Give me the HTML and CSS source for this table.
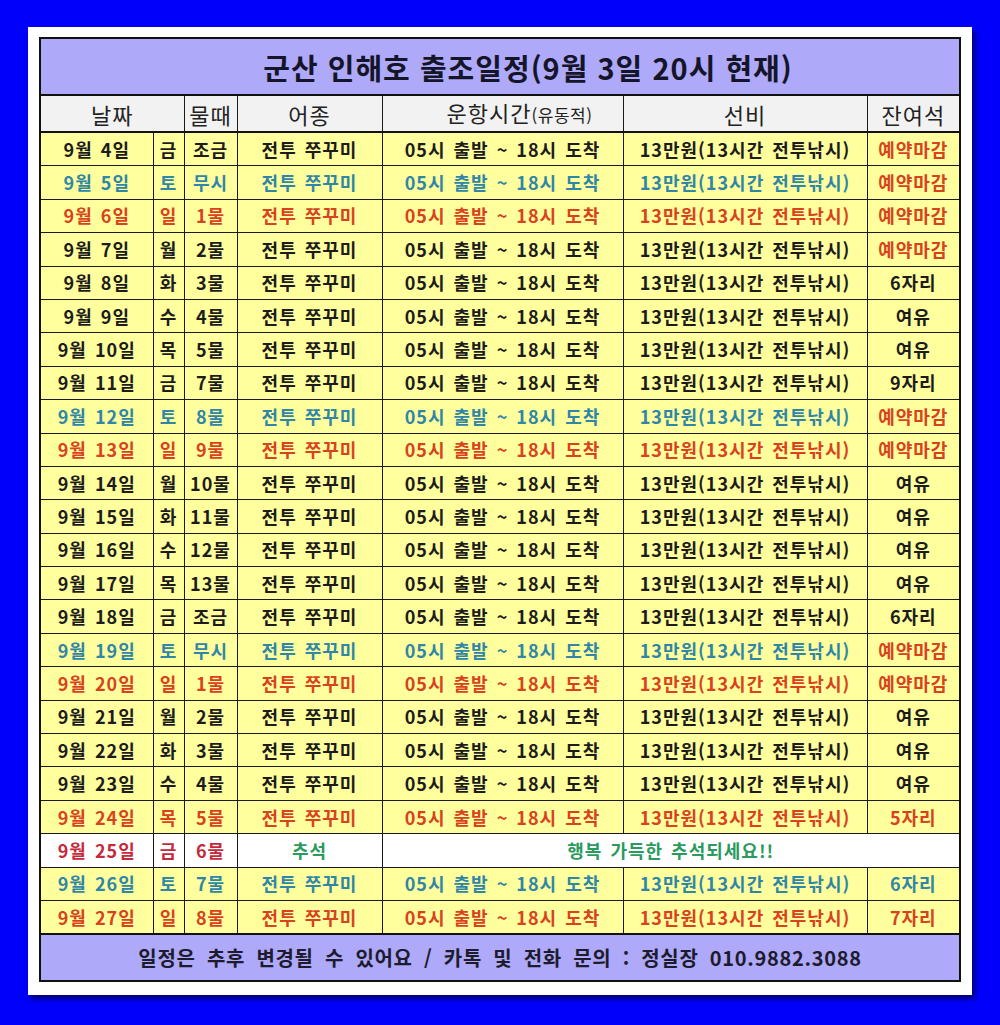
FILE: index.html
```html
<!DOCTYPE html>
<html lang="ko">
<head>
<meta charset="utf-8">
<title>군산 인해호 출조일정</title>
<link rel="stylesheet" href="styles.css">
</head>
<body>
<div class="panel">
<table class="sched">
<colgroup>
<col class="c-date"><col class="c-day"><col class="c-tide"><col class="c-fish"><col class="c-time"><col class="c-fee"><col class="c-seat">
</colgroup>
<thead>
<tr class="title"><th colspan="7">군산 인해호 출조일정(9월 3일 20시 현재)</th></tr>
<tr class="head"><th colspan="2">날짜</th><th>물때</th><th>어종</th><th class="h-time">운항시간<small>(유동적)</small></th><th>선비</th><th>잔여석</th></tr>
</thead>
<tbody>
<tr><td>9월 4일</td><td>금</td><td>조금</td><td>전투 쭈꾸미</td><td>05시 출발 ~ 18시 도착</td><td>13만원(13시간 전투낚시)</td><td class="red">예약마감</td></tr>
<tr class="blue"><td>9월 5일</td><td>토</td><td>무시</td><td>전투 쭈꾸미</td><td>05시 출발 ~ 18시 도착</td><td>13만원(13시간 전투낚시)</td><td class="red">예약마감</td></tr>
<tr class="red"><td>9월 6일</td><td>일</td><td>1물</td><td>전투 쭈꾸미</td><td>05시 출발 ~ 18시 도착</td><td>13만원(13시간 전투낚시)</td><td>예약마감</td></tr>
<tr><td>9월 7일</td><td>월</td><td>2물</td><td>전투 쭈꾸미</td><td>05시 출발 ~ 18시 도착</td><td>13만원(13시간 전투낚시)</td><td class="red">예약마감</td></tr>
<tr><td>9월 8일</td><td>화</td><td>3물</td><td>전투 쭈꾸미</td><td>05시 출발 ~ 18시 도착</td><td>13만원(13시간 전투낚시)</td><td>6자리</td></tr>
<tr><td>9월 9일</td><td>수</td><td>4물</td><td>전투 쭈꾸미</td><td>05시 출발 ~ 18시 도착</td><td>13만원(13시간 전투낚시)</td><td>여유</td></tr>
<tr><td>9월 10일</td><td>목</td><td>5물</td><td>전투 쭈꾸미</td><td>05시 출발 ~ 18시 도착</td><td>13만원(13시간 전투낚시)</td><td>여유</td></tr>
<tr><td>9월 11일</td><td>금</td><td>7물</td><td>전투 쭈꾸미</td><td>05시 출발 ~ 18시 도착</td><td>13만원(13시간 전투낚시)</td><td>9자리</td></tr>
<tr class="blue"><td>9월 12일</td><td>토</td><td>8물</td><td>전투 쭈꾸미</td><td>05시 출발 ~ 18시 도착</td><td>13만원(13시간 전투낚시)</td><td class="red">예약마감</td></tr>
<tr class="red"><td>9월 13일</td><td>일</td><td>9물</td><td>전투 쭈꾸미</td><td>05시 출발 ~ 18시 도착</td><td>13만원(13시간 전투낚시)</td><td>예약마감</td></tr>
<tr><td>9월 14일</td><td>월</td><td>10물</td><td>전투 쭈꾸미</td><td>05시 출발 ~ 18시 도착</td><td>13만원(13시간 전투낚시)</td><td>여유</td></tr>
<tr><td>9월 15일</td><td>화</td><td>11물</td><td>전투 쭈꾸미</td><td>05시 출발 ~ 18시 도착</td><td>13만원(13시간 전투낚시)</td><td>여유</td></tr>
<tr><td>9월 16일</td><td>수</td><td>12물</td><td>전투 쭈꾸미</td><td>05시 출발 ~ 18시 도착</td><td>13만원(13시간 전투낚시)</td><td>여유</td></tr>
<tr><td>9월 17일</td><td>목</td><td>13물</td><td>전투 쭈꾸미</td><td>05시 출발 ~ 18시 도착</td><td>13만원(13시간 전투낚시)</td><td>여유</td></tr>
<tr><td>9월 18일</td><td>금</td><td>조금</td><td>전투 쭈꾸미</td><td>05시 출발 ~ 18시 도착</td><td>13만원(13시간 전투낚시)</td><td>6자리</td></tr>
<tr class="blue"><td>9월 19일</td><td>토</td><td>무시</td><td>전투 쭈꾸미</td><td>05시 출발 ~ 18시 도착</td><td>13만원(13시간 전투낚시)</td><td class="red">예약마감</td></tr>
<tr class="red"><td>9월 20일</td><td>일</td><td>1물</td><td>전투 쭈꾸미</td><td>05시 출발 ~ 18시 도착</td><td>13만원(13시간 전투낚시)</td><td>예약마감</td></tr>
<tr><td>9월 21일</td><td>월</td><td>2물</td><td>전투 쭈꾸미</td><td>05시 출발 ~ 18시 도착</td><td>13만원(13시간 전투낚시)</td><td>여유</td></tr>
<tr><td>9월 22일</td><td>화</td><td>3물</td><td>전투 쭈꾸미</td><td>05시 출발 ~ 18시 도착</td><td>13만원(13시간 전투낚시)</td><td>여유</td></tr>
<tr><td>9월 23일</td><td>수</td><td>4물</td><td>전투 쭈꾸미</td><td>05시 출발 ~ 18시 도착</td><td>13만원(13시간 전투낚시)</td><td>여유</td></tr>
<tr class="red"><td>9월 24일</td><td>목</td><td>5물</td><td>전투 쭈꾸미</td><td>05시 출발 ~ 18시 도착</td><td>13만원(13시간 전투낚시)</td><td>5자리</td></tr>
<tr class="holiday"><td>9월 25일</td><td>금</td><td>6물</td><td class="green">추석</td><td class="green" colspan="3">행복 가득한 추석되세요!!</td></tr>
<tr class="blue"><td>9월 26일</td><td>토</td><td>7물</td><td>전투 쭈꾸미</td><td>05시 출발 ~ 18시 도착</td><td>13만원(13시간 전투낚시)</td><td>6자리</td></tr>
<tr class="red"><td>9월 27일</td><td>일</td><td>8물</td><td>전투 쭈꾸미</td><td>05시 출발 ~ 18시 도착</td><td>13만원(13시간 전투낚시)</td><td>7자리</td></tr>
</tbody>
<tfoot>
<tr class="foot"><td colspan="7">일정은 추후 변경될 수 있어요 / 카톡 및 전화 문의 : 정실장 010.9882.3088</td></tr>
</tfoot>
</table>
</div>
</body>
</html>
```

FILE: styles.css
```css
html, body {
  margin: 0;
  padding: 0;
}
body {
  background: #0000fb;
  width: 1000px;
  height: 1025px;
  padding-top: 27px;
  box-sizing: border-box;
  font-family: "Noto Sans CJK KR", "Noto Sans", sans-serif;
}
.panel {
  margin-left: 28px;
  width: 944px;
  height: 968px;
  box-sizing: border-box;
  background: #ffffff;
  padding: 10px 13px 11px 11px;
  box-shadow: 3px 4px 5px rgba(0, 0, 60, 0.7);
}
.sched {
  width: 920px;
  border-collapse: collapse;
  table-layout: fixed;
  border: 2px solid #111;
}
.c-date { width: 113px; }
.c-day { width: 31px; }
.c-tide { width: 53px; }
.c-fish { width: 145px; }
.c-time { width: 241px; }
.c-fee { width: 244px; }
.c-seat { width: 93px; }

.sched th, .sched td {
  border: 1px solid #1a1a1a;
  padding: 0;
  text-align: center;
  white-space: nowrap;
  overflow: hidden;
}
.sched .title th {
  background: #aea9f8;
  height: 55px;
  font-size: 29px;
  font-weight: 700;
  color: #15152a;
  border-bottom: 2px solid #111;
  letter-spacing: 1px;
  line-height: 34px;
  padding-left: 56px;
}
.head th {
  background: #f2f2f2;
  height: 35px;
  font-size: 22px;
  font-weight: 400;
  color: #222;
  border-bottom: 2px solid #111;
  letter-spacing: 1px;
  line-height: 26px;
}
.sched .head .h-time {
  padding-left: 34px;
}
.head small {
  font-size: 17px;
  letter-spacing: 0.5px;
}
tbody td {
  background: #ffff9e;
  height: 32.4px;
  font-size: 18px;
  font-weight: 700;
  color: #1c1c1c;
  letter-spacing: 1px;
  word-spacing: 2px;
  line-height: 21px;
}
tbody tr.blue td { color: #2f86a6; }
tbody tr.red td, tbody tr td.red { color: #d8421e; }
tbody tr.holiday td {
  background: #ffffff;
  color: #c42a3a;
}
tbody tr.holiday td.green { color: #2a9a5e; }
.foot td {
  background: #aea9f8;
  height: 45px;
  font-size: 20px;
  font-weight: 700;
  color: #1c1c2e;
  border-top: 2px solid #111;
  word-spacing: 5px;
  letter-spacing: 0.7px;
  line-height: 24px;
}
```
